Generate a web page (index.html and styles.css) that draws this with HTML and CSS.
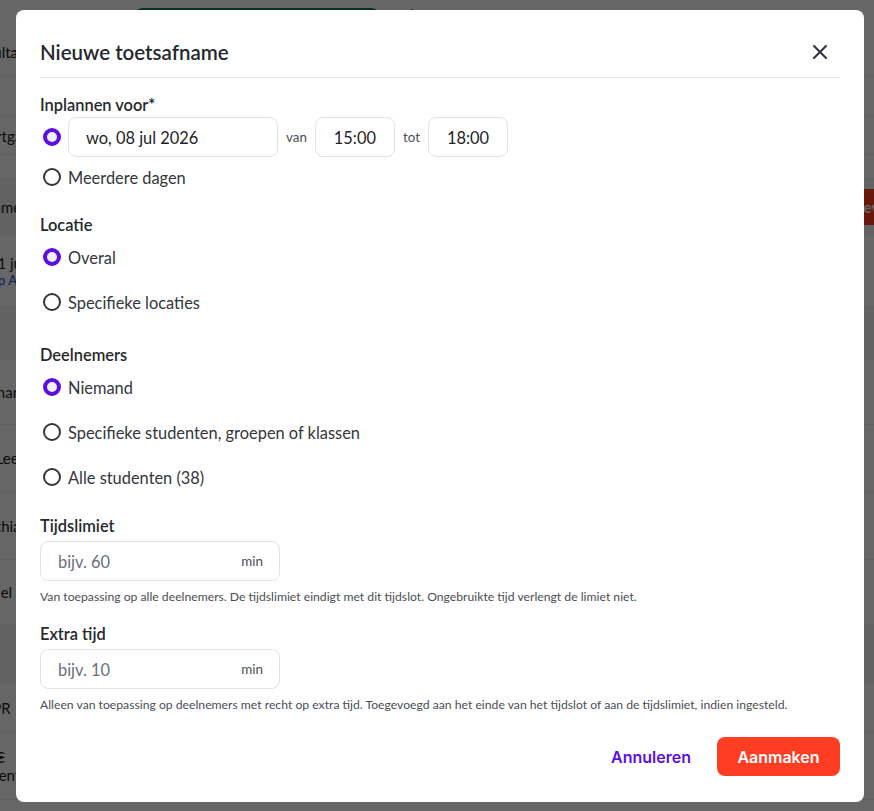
FILE: index.html
```html
<!DOCTYPE html>
<html lang="nl">
<head>
  <meta charset="UTF-8">
  <title>Nieuwe toetsafname</title>
  <meta name="viewport" content="width=device-width, initial-scale=1">
  <link rel="stylesheet" href="styles.css">
</head>
<body>

<div class="page">
  <div class="topbar">
    <span class="crumb">›</span>
    <span class="tab-pill"></span>
    <span class="crumb crumb-mid">›</span>
  </div>
  <div class="row h-50"><span>Resultaten</span></div>
  <div class="row h-40"></div>
  <div class="row h-38"><span>Voortgang</span></div>
  <div class="row h-25"></div>
  <div class="row h-55 band"><span>Afname in sessie</span><span class="red-btn">Toevoegen</span></div>
  <div class="row h-73 two"><span>wo, 1 jul 2026</span><span class="sub">Groep A</span></div>
  <div class="row h-52 band"></div>
  <div class="row h-65"><span>Niemand</span></div>
  <div class="row h-67"><span>Jan Leeuwen</span></div>
  <div class="row h-68"><span>Cynthia</span></div>
  <div class="row h-65"><span>Daniel</span></div>
  <div class="row h-58 band"></div>
  <div class="row h-50"><span>GDPR</span></div>
  <div class="row h-67 two"><span class="strike">Mr, €</span><span>studenten</span></div>
</div>

<div class="overlay">
  <div class="dialog">
    <div class="dialog-header">
      <h2>Nieuwe toetsafname</h2>
      <button class="close" aria-label="Sluiten">
        <svg width="16" height="16" viewBox="0 0 16 16"><path d="M2 2 L14 14 M14 2 L2 14" stroke="#2f3237" stroke-width="2" stroke-linecap="round"/></svg>
      </button>
    </div>

    <div class="field f-plan">
      <div class="field-label">Inplannen voor*</div>
      <div class="date-row">
        <span class="radio checked"></span>
        <div class="box box-date">wo, 08 jul 2026</div>
        <span class="small">van</span>
        <div class="box box-time">15:00</div>
        <span class="small">tot</span>
        <div class="box box-time">18:00</div>
      </div>
      <label class="option opt-first"><span class="radio"></span>Meerdere dagen</label>
    </div>

    <div class="field f-loc">
      <div class="field-label">Locatie</div>
      <label class="option"><span class="radio checked"></span>Overal</label>
      <label class="option"><span class="radio"></span>Specifieke locaties</label>
    </div>

    <div class="field f-part">
      <div class="field-label">Deelnemers</div>
      <label class="option"><span class="radio checked"></span>Niemand</label>
      <label class="option"><span class="radio"></span>Specifieke studenten, groepen of klassen</label>
      <label class="option"><span class="radio"></span>Alle studenten (38)</label>
    </div>

    <div class="field f-limit">
      <div class="field-label">Tijdslimiet</div>
      <div class="box box-min"><span class="ph">bijv. 60</span><span class="small">min</span></div>
      <p class="help">Van toepassing op alle deelnemers. De tijdslimiet eindigt met dit tijdslot. Ongebruikte tijd verlengt de limiet niet.</p>
    </div>

    <div class="field f-extra">
      <div class="field-label">Extra tijd</div>
      <div class="box box-min"><span class="ph">bijv. 10</span><span class="small">min</span></div>
      <p class="help">Alleen van toepassing op deelnemers met recht op extra tijd. Toegevoegd aan het einde van het tijdslot of aan de tijdslimiet, indien ingesteld.</p>
    </div>

    <div class="actions">
      <button class="btn-link">Annuleren</button>
      <button class="btn-primary">Aanmaken</button>
    </div>
  </div>
</div>

</body>
</html>
```

FILE: styles.css
```css
* {
  box-sizing: border-box;
}
body {
  margin: 0;
  font-family: Lato, "Noto Sans", sans-serif;
  color: #2a2d33;
  background: #fff;
}

/* page behind the dialog */
.page {
  width: 874px;
  height: 811px;
  overflow: hidden;
}
.topbar {
  height: 27px;
  display: flex;
  align-items: flex-start;
}
.crumb {
  font-size: 16px;
  color: #888;
  margin-left: -4px;
  margin-top: 12px;
  line-height: 20px;
}
.crumb-mid {
  margin-left: 30px;
  margin-top: 0;
  color: #222;
}
.tab-pill {
  width: 248px;
  height: 24px;
  margin-left: 132px;
  margin-top: 8px;
  border: 2px solid #0c7a4a;
  border-radius: 10px;
}
.row {
  border-bottom: 1px solid #f0f0f0;
  display: flex;
  align-items: center;
  font-size: 15px;
  color: #222;
}
.row > span:first-child {
  margin-left: -30px;
}
.row.two {
  flex-direction: column;
  align-items: flex-start;
  justify-content: center;
}
.row.two > span {
  margin-left: -30px;
}
.row .sub {
  font-size: 13px;
  color: #1d4ed8;
}
.band {
  background: #f4f4f4;
}
.strike {
  text-decoration: line-through;
}
.red-btn {
  margin-left: auto;
  margin-right: -60px;
  background: #ff3d22;
  color: #fff;
  font-weight: 700;
  padding: 9px 14px;
  border-radius: 6px;
}
.h-25 { height: 25px; }
.h-38 { height: 38px; }
.h-40 { height: 40px; }
.h-50 { height: 50px; }
.h-52 { height: 52px; }
.h-55 { height: 55px; }
.h-58 { height: 58px; }
.h-65 { height: 65px; }
.h-67 { height: 67px; }
.h-68 { height: 68px; }
.h-73 { height: 73px; }

/* dialog */
.overlay {
  position: fixed;
  inset: 0;
  background: rgba(0, 0, 0, 0.6);
}
.dialog {
  position: absolute;
  left: 16px;
  top: 10px;
  width: 848px;
  height: 792px;
  background: #fff;
  border-radius: 8px;
  padding: 0 24px;
}
.dialog-header {
  display: flex;
  align-items: center;
  justify-content: space-between;
  padding: 28px 0 11px;
  border-bottom: 1px solid #e6e6e6;
}
.dialog-header h2 {
  margin: 0;
  font-size: 20.5px;
  line-height: 28px;
  font-weight: 600;
  color: #25282d;
}
.close {
  border: none;
  background: none;
  padding: 0;
  margin-right: 12px;
  width: 16px;
  height: 16px;
  display: flex;
}
.field-label {
  font-size: 16.4px;
  line-height: 24px;
  font-weight: 600;
  color: #25282d;
}
.f-plan { margin-top: 15px; }
.f-loc { margin-top: 24px; }
.f-part { margin-top: 29px; }
.f-limit { margin-top: 25px; }
.f-extra { margin-top: 17px; }

.date-row {
  display: flex;
  align-items: center;
  margin-top: 0;
  height: 40px;
}
.date-row .radio {
  margin-right: 7px;
}
.date-row .small {
  margin: 0 8px;
}
.box {
  height: 40px;
  border: 1px solid #e3e3e3;
  border-radius: 8px;
  display: flex;
  align-items: center;
  font-size: 16.4px;
  color: #1f2226;
}
.box-date {
  width: 210px;
  padding-left: 17px;
}
.box-time {
  width: 80px;
  justify-content: center;
}
.box-min {
  width: 240px;
  justify-content: space-between;
  padding: 0 16px 0 17px;
  margin-top: 3px;
}
.ph {
  color: #6b6f76;
}
.small {
  font-size: 13.4px;
  color: #4a4e55;
}
.option {
  display: flex;
  align-items: center;
  gap: 7px;
  height: 24px;
  font-size: 16.4px;
  color: #33363b;
  margin-top: 21px;
  margin-left: 3px;
}
.field-label + .option {
  margin-top: 8px;
}
.opt-first {
  margin-top: 8px;
}
.radio {
  width: 18px;
  height: 18px;
  border-radius: 50%;
  border: 2px solid #33363b;
  background: #fff;
  flex: none;
  margin-left: 3px;
}
.option .radio {
  margin-left: 0;
}
.radio.checked {
  border: 4px solid #5b10e0;
  background: #eef0f6;
}
.help {
  margin: 8px 0 0;
  font-size: 12.2px;
  line-height: 16px;
  color: #4a4e55;
}
.actions {
  display: flex;
  justify-content: flex-end;
  align-items: center;
  gap: 26px;
  margin-top: 24px;
}
.btn-link {
  border: none;
  background: none;
  font-family: Inter, sans-serif;
  font-size: 16px;
  font-weight: 600;
  color: #5b10e0;
  padding: 0;
}
.btn-primary {
  border: none;
  background: #ff3d22;
  color: #fff;
  font-family: Inter, sans-serif;
  font-size: 16px;
  font-weight: 600;
  height: 39px;
  width: 123px;
  border-radius: 8px;
}
```
